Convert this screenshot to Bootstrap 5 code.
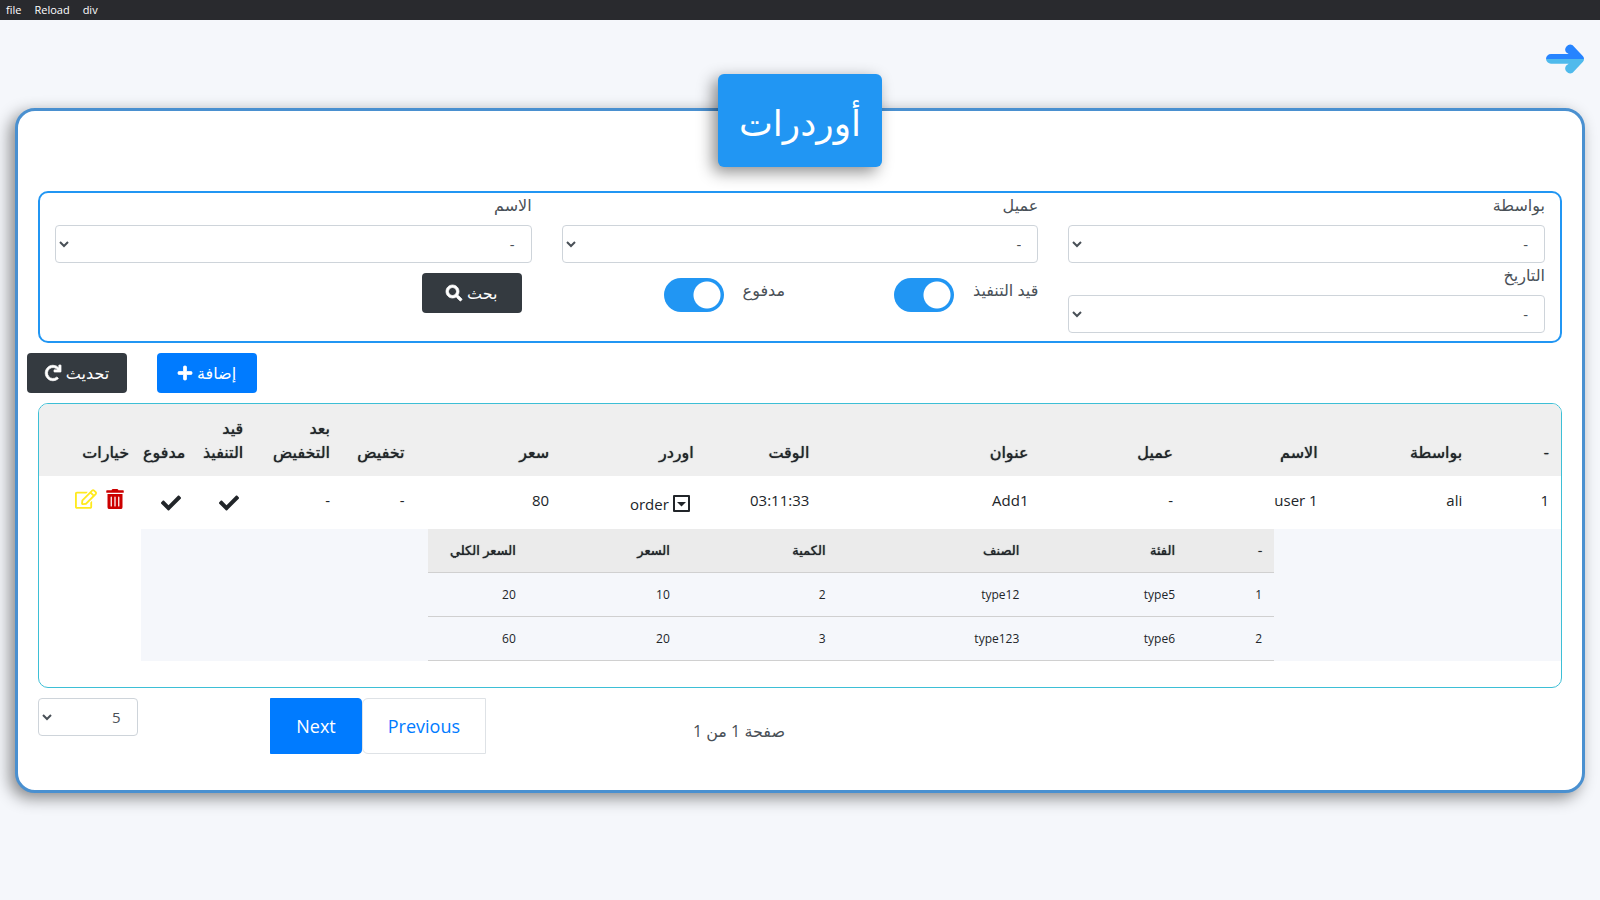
<!DOCTYPE html>
<html lang="ar" dir="rtl">
<head>
<meta charset="utf-8">
<meta name="viewport" content="width=device-width, initial-scale=1">
<title>أوردرات</title>
<link href="https://cdn.jsdelivr.net/npm/bootstrap@5.3.0/dist/css/bootstrap.min.css" rel="stylesheet">
<style>
:root { --latin: "Open Sans", "DejaVu Sans", sans-serif; }
body { min-height: 100vh; background: #f5f7fb; color: #495057; font-family: var(--latin); font-size: 15px; line-height: 24px; }
.menubar { background: #292a2e; height: 20px; padding: 0 6px; gap: 13px; }
.menubar button { background: none; border: 0; padding: 0; color: #fff; font-size: 11px; line-height: 20px; }
.topline { height: 88px; padding: 24px 16px 0; }
.panel { background: #fff; border: 3px solid #4a90d0; border-radius: 20px; margin: 0 15px; padding: 0 20px 20px; box-shadow: -5px 5px 16px rgba(0,0,0,.45); }
.title-badge { background: #2196f3; color: #fff; border-radius: 6px; margin: -37px auto 24px; width: 164px; height: 93px; font-size: 36px; font-weight: 400; line-height: 97px; text-align: center; box-shadow: -5px 5px 16px rgba(0,0,0,.45); }
.row { --bs-gutter-x: 30px; }
.filters { border: 2px solid #2196f3; border-radius: 10px; padding: 0 15px 8px; }
.filters label, .pages-text { font-size: 16px; }
.field label { display: block; margin-bottom: 8px; }
.pick { height: 38px; padding: 6px 16px; border: 1px solid #ced4da; border-radius: 4px; color: #495057; font-size: 15px; line-height: 24px;
  background: #fff url("data:image/svg+xml,%3Csvg xmlns='http://www.w3.org/2000/svg' viewBox='0 0 10 7'%3E%3Cpath d='M1 1l4 4 4-4' fill='none' stroke='%23495057' stroke-width='2'/%3E%3C/svg%3E") no-repeat 3px 15px / 10px 7px; }
.toggle { gap: 19px; padding-top: 10px; }
.toggle label { padding-top: 5px; white-space: nowrap; }
.toggle .form-check-input { width: 60px; height: 34px; margin: 5px 0 0; border: 0; border-radius: 17px; float: none; background: #2196f3 radial-gradient(circle at 43px 17px, #fff 13px, transparent 14px) no-repeat; }
.act { --bs-btn-border-radius: 4px; --bs-btn-border-width: 0; width: 100px; height: 40px; padding: 0; font-size: 16px; display: flex; align-items: center; justify-content: center; gap: 5px; }
.act svg, .tools svg, .tick, .caret { fill: currentColor; }
.act svg { stroke: currentColor; stroke-width: 24px; overflow: visible; }
.btn-dark { --bs-btn-bg: #343a40; }
.btn-primary { --bs-btn-bg: #007bff; }
.search { margin: 10px; }
.actions { gap: 30px; margin: 10px -11px; }
.orders-box { border: 1px solid #3dbfd6; border-radius: 10px; overflow: hidden; padding-bottom: 26px; }
.orders { table-layout: fixed; width: 100%; color: #212529; border-collapse: separate; border-spacing: 0; }
.orders th, .orders td { padding: 12px; text-align: right; }
.orders > thead > tr > th { background: #efefef; vertical-align: bottom; font-size: 16px; font-weight: 400; text-shadow: 0 0 1px currentColor; }
.orders > tbody > tr > td { vertical-align: top; height: 53px; }
.orders > tbody > tr > .order-cell { padding: 16px 16px 8px; white-space: nowrap; }
.caret { vertical-align: -2px; }
.orders > tbody > tr > .nest { background: #f5f7fb; padding: 0; }
.orders > tbody > tr > .mark-cell { padding: 15px 16px 0 0; line-height: 20px; }
.orders > tbody > tr > .tools { padding: 11px 17px 0 0; line-height: 20px; white-space: nowrap; }
.tools button { border: 0; background: none; padding: 0; margin-left: 9px; }
.tools .remove { color: #c00; }
.tools .edit { color: #ffea1e; }
.c1 { width: 5.7%; } .c2 { width: 9.5%; } .c3 { width: 14.4%; } .c4 { width: 7.6%; }
.c5 { width: 4.9%; } .c6 { width: 3.8%; } .c7 { width: 3.7%; }
.items { table-layout: fixed; width: 59.6%; margin: 0 auto; border-collapse: separate; border-spacing: 0; font-size: 12px; line-height: 19px; }
.items th, .items td { height: 44px; border-bottom: 1px solid #d0d0d0; }
.items th { background: #ebebeb; font-weight: 400; font-size: 13px; white-space: nowrap; text-shadow: 0 0 1px currentColor; }
.d1 { width: 10.3%; } .d2 { width: 18.4%; } .d3 { width: 22.9%; } .d4 { width: 18.2%; }
.foot { margin-top: 10px; }
.pages-text { padding-top: 21px; }
.pager { margin: 0 0 16px; padding-right: 40px; }
.pager .page-link { margin: 0; padding: 15px 25px; font-size: 18px; line-height: 24px; color: #007bff; border-color: #dee2e6; border-radius: 0; }
.pager .active .page-link { background: #007bff; border-color: #007bff; color: #fff; border-radius: 0 4px 4px 0; }
</style>
</head>
<body>
<nav class="menubar d-flex" dir="ltr">
  <button type="button">file</button><button type="button">Reload</button><button type="button">div</button>
</nav>
<div class="topline">
  <a href="#" class="d-block" aria-label="رجوع">
    <svg class="d-block" width="38" height="30" viewBox="0 0 114 90"><path fill="#2684ff" d="M0 45A15 15 0 0 1 15 30H68L60 25A15 15 0 0 1 80 4L111 37Q114 40 114 45Z"/><path fill="#4fbaec" d="M0 45A15 15 0 0 0 15 59H68L60 65A15 15 0 0 0 80 86L111 53Q114 50 114 45Z"/></svg>
  </a>
</div>
<main class="panel">
  <h1 class="title-badge">أوردرات</h1>

  <form class="filters">
    <div class="row">
      <div class="col-4 field"><label for="by">بواسطة</label><select id="by" class="form-control pick"><option>-</option></select></div>
      <div class="col-4 field"><label for="client">عميل</label><select id="client" class="form-control pick"><option>-</option></select></div>
      <div class="col-4 field"><label for="name">الاسم</label><select id="name" class="form-control pick"><option>-</option></select></div>
      <div class="col-4 field"><label for="date">التاريخ</label><select id="date" class="form-control pick"><option>-</option></select></div>
      <div class="col-2 d-flex align-items-start toggle"><label for="pending">قيد التنفيذ</label><input id="pending" class="form-check-input" type="checkbox" role="switch" checked></div>
      <div class="col-2 d-flex align-items-start toggle"><label for="paid">مدفوع</label><input id="paid" class="form-check-input" type="checkbox" role="switch" checked></div>
      <div class="col-4"><button type="button" class="btn btn-dark act search">بحث
        <svg width="16" height="16" viewBox="0 0 512 512"><path d="M505 442.7L405.3 343c-4.5-4.5-10.6-7-17-7H372c27.6-35.3 44-79.7 44-128C416 93.1 322.9 0 208 0S0 93.1 0 208s93.1 208 208 208c48.3 0 92.7-16.4 128-44v16.3c0 6.4 2.5 12.5 7 17l99.7 99.7c9.4 9.4 24.6 9.4 33.9 0l28.3-28.3c9.4-9.4 9.4-24.6.1-34zM208 336c-70.7 0-128-57.2-128-128 0-70.7 57.2-128 128-128 70.7 0 128 57.2 128 128 0 70.7-57.2 128-128 128z"/></svg></button></div>
    </div>
  </form>

  <div class="actions d-flex justify-content-end">
    <button type="button" class="btn btn-primary act">إضافة
      <svg width="14" height="16" viewBox="0 0 448 512"><path d="M416 208H272V64c0-17.67-14.33-32-32-32h-32c-17.67 0-32 14.33-32 32v144H32c-17.67 0-32 14.33-32 32v32c0 17.67 14.33 32 32 32h144v144c0 17.67 14.33 32 32 32h32c17.67 0 32-14.33 32-32V304h144c17.67 0 32-14.33 32-32v-32c0-17.67-14.33-32-32-32z"/></svg></button>
    <button type="button" class="btn btn-dark act">تحديث
      <svg width="16" height="16" viewBox="0 0 512 512"><path d="M500.33 0h-47.41a12 12 0 0 0-12 12.57l4 82.76A247.42 247.42 0 0 0 256 8C119.34 8 7.9 119.53 8 256.19 8.1 393.07 119.1 504 256 504a247.1 247.1 0 0 0 166.18-63.91 12 12 0 0 0 .48-17.43l-34-34a12 12 0 0 0-16.38-.55A176 176 0 1 1 402.1 157.8l-101.53-4.87a12 12 0 0 0-12.57 12v47.41a12 12 0 0 0 12 12h200.33a12 12 0 0 0 12-12V12a12 12 0 0 0-12-12z"/></svg></button>
  </div>

  <div class="orders-box">
    <table class="orders">
      <colgroup><col class="c1"><col class="c2"><col class="c2"><col class="c2"><col class="c3"><col class="c4"><col class="c2"><col class="c2"><col class="c5"><col class="c1"><col class="c6"><col class="c7"><col></colgroup>
      <thead><tr><th>-</th><th>بواسطة</th><th>الاسم</th><th>عميل</th><th>عنوان</th><th>الوقت</th><th>اوردر</th><th>سعر</th><th>تخفيض</th><th>بعد التخفيض</th><th>قيد التنفيذ</th><th>مدفوع</th><th>خيارات</th></tr></thead>
      <tbody>
        <tr>
          <td>1</td><td>ali</td><td dir="ltr">user 1</td><td>-</td><td>Add1</td><td>03:11:33</td>
          <td class="order-cell"><svg class="caret" width="17" height="17" viewBox="0 0 17 17"><path fill-rule="evenodd" d="M0 1Q0 0 1 0H16Q17 0 17 1V16Q17 17 16 17H1Q0 17 0 16ZM2 2V15H15V2Z"/><path d="M4 7H13L8.500 11.500Z"/></svg> order</td>
          <td>80</td><td>-</td><td>-</td>
          <td class="mark-cell"><svg class="tick" width="20" height="20" viewBox="0 0 512 512"><path d="M173.898 439.404l-166.4-166.4c-9.997-9.997-9.997-26.206 0-36.204l36.203-36.204c9.997-9.998 26.207-9.998 36.204 0L192 312.69 432.095 72.596c9.997-9.997 26.207-9.997 36.204 0l36.203 36.204c9.997 9.997 9.997 26.206 0 36.204l-294.4 294.401c-9.998 9.997-26.207 9.997-36.204-.001z"/></svg></td>
          <td class="mark-cell"><svg class="tick" width="20" height="20" viewBox="0 0 512 512"><path d="M173.898 439.404l-166.4-166.4c-9.997-9.997-9.997-26.206 0-36.204l36.203-36.204c9.997-9.998 26.207-9.998 36.204 0L192 312.69 432.095 72.596c9.997-9.997 26.207-9.997 36.204 0l36.203 36.204c9.997 9.997 9.997 26.206 0 36.204l-294.4 294.401c-9.998 9.997-26.207 9.997-36.204-.001z"/></svg></td>
          <td class="tools"><div class="d-flex"><button type="button" class="remove" aria-label="حذف"><svg width="18" height="20" viewBox="0 0 448 512"><path d="M32 464a48 48 0 0 0 48 48h288a48 48 0 0 0 48-48V128H32zm272-256a16 16 0 0 1 32 0v224a16 16 0 0 1-32 0zm-96 0a16 16 0 0 1 32 0v224a16 16 0 0 1-32 0zm-96 0a16 16 0 0 1 32 0v224a16 16 0 0 1-32 0zM432 32H312l-9.400-18.700A24 24 0 0 0 281.100 0H166.800a23.720 23.720 0 0 0-21.400 13.300L136 32H16A16 16 0 0 0 0 48v32a16 16 0 0 0 16 16h416a16 16 0 0 0 16-16V48a16 16 0 0 0-16-16z"/></svg></button><button type="button" class="edit" aria-label="تعديل"><svg width="22" height="20" viewBox="0 0 576 512"><path d="M402.300 344.900l32-32c5-5 13.700-1.500 13.700 5.700V464c0 26.500-21.500 48-48 48H48c-26.500 0-48-21.500-48-48V112c0-26.500 21.500-48 48-48h273.500c7.100 0 10.700 8.600 5.700 13.700l-32 32c-1.500 1.500-3.500 2.300-5.700 2.300H48v352h352V350.500c0-2.100.8-4.100 2.300-5.600zm156.600-201.800L296.300 405.700l-90.400 10c-26.200 2.900-48.500-19.200-45.600-45.600l10-90.400L432.900 17.100c22.900-22.900 59.900-22.900 82.700 0l43.200 43.200c22.900 22.900 22.900 60 .1 82.800zM460.100 174L402 115.900 216.200 301.800l-7.300 65.300 65.300-7.300L460.100 174zm64.800-79.700l-43.200-43.200c-4.100-4.100-10.800-4.100-14.800 0L436 82l58.100 58.100 30.900-30.900c4-4.200 4-10.800-.1-14.900z"/></svg></button></div></td>
        </tr>
        <tr>
          <td colspan="12" class="nest">
            <table class="items">
              <colgroup><col class="d1"><col class="d2"><col class="d3"><col class="d2"><col class="d4"><col></colgroup>
              <thead><tr><th>-</th><th>الفئة</th><th>الصنف</th><th>الكمية</th><th>السعر</th><th>السعر الكلي</th></tr></thead>
              <tbody>
                <tr><td>1</td><td>type5</td><td>type12</td><td>2</td><td>10</td><td>20</td></tr>
                <tr><td>2</td><td>type6</td><td>type123</td><td>3</td><td>20</td><td>60</td></tr>
              </tbody>
            </table>
          </td>
          <td></td>
        </tr>
      </tbody>
    </table>
  </div>

  <div class="row foot">
    <div class="col-6"></div>
    <div class="col-2 pages-text">صفحة 1 من 1</div>
    <div class="col-3"><ul class="pagination pager">
      <li class="page-item"><a class="page-link" href="#">Previous</a></li>
      <li class="page-item active"><a class="page-link" href="#">Next</a></li>
    </ul></div>
    <div class="col-1"><select class="form-control pick" aria-label="عدد الصفوف"><option>5</option></select></div>
  </div>
</main>
<script src="https://cdn.jsdelivr.net/npm/bootstrap@5.3.0/dist/js/bootstrap.bundle.min.js"></script>
</body>
</html>
